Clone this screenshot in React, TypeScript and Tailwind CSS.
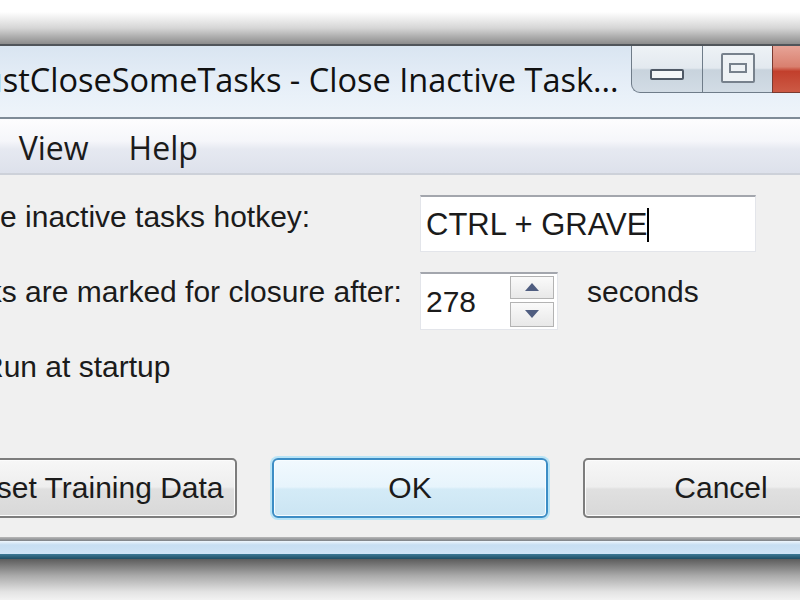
function CaptionButtons() {
  return (
    <div className="flex h-[47px] shrink-0 items-stretch">
      <div className="flex w-[71px] justify-center rounded-bl-[9px] border-b border-l border-[#6f7c89] bg-[linear-gradient(to_bottom,#eef2f6_0%,#e3e9ef_48%,#c8d3dd_52%,#d2dce5_100%)] pt-[23px]">
        <div className="h-[11px] w-[34px] rounded-[2px] border-2 border-[#4f5966] bg-[#f4f6f8]" />
      </div>
      <div className="flex w-[70px] justify-center border-b border-l border-[#6f7c89] bg-[linear-gradient(to_bottom,#eef2f6_0%,#e3e9ef_48%,#c8d3dd_52%,#d2dce5_100%)] pt-[7px]">
        <div className="flex h-[30px] w-[34px] items-center justify-center rounded-[2px] border-2 border-[#77818c] bg-[#eef2f5]">
          <div className="h-[10px] w-[18px] border-2 border-[#77818c]" />
        </div>
      </div>
      <div className="w-[28px] border-b border-l border-[#7a3a30] bg-[linear-gradient(to_bottom,#e7a497_0%,#d9806f_45%,#c23f2c_55%,#cc5a45_100%)]" />
    </div>
  );
}

function Arrow({ up }: { up?: boolean }) {
  return (
    <svg width="14" height="8" viewBox="0 0 14 8">
      <path d={up ? "M7 0 L14 8 L0 8 Z" : "M0 0 L14 0 L7 8 Z"} fill="#4f5d80" />
    </svg>
  );
}

function VistaButton({ label, width, focused }: { label: string; width: string; focused?: boolean }) {
  return (
    <button
      className={
        focused
          ? `${width} h-[60px] shrink-0 rounded-[6px] border-2 border-[#3c8dc5] bg-[linear-gradient(to_bottom,#f1f9fe_0%,#e7f4fc_48%,#d4ebf7_52%,#cbe5f3_100%)] text-center text-[30px] leading-[30px] shadow-[0_0_0_2px_#b8e4f7,inset_0_0_0_1px_#f7fcff]`
          : `${width} h-[60px] shrink-0 rounded-[5px] border-2 border-[#7d7d7d] bg-[linear-gradient(to_bottom,#f7f7f7_0%,#eeeeee_48%,#e0e0e0_52%,#d8d8d8_100%)] text-center text-[30px] leading-[30px] shadow-[inset_0_0_0_1px_#fcfcfc]`
      }
    >
      {label}
    </button>
  );
}

export default function App() {
  return (
    <div className="flex h-[600px] w-[800px] flex-col overflow-hidden bg-white font-['Liberation_Sans',Arial,sans-serif] text-[#1b1b1b]">
      <div className="h-[44px] shrink-0 bg-[linear-gradient(to_bottom,#ffffff_0px,#ffffff_12px,#d6d6d6_28px,#8c8c8c_44px)]" />
      <div className="h-[2px] shrink-0 bg-[#50555a]" />

      {/* title bar */}
      <div className="flex h-[71px] shrink-0 items-start bg-[linear-gradient(to_bottom,#d9e5f1_0%,#e3ecf6_40%,#e9f1f9_70%,#eef4fa_100%)]">
        <div className="min-w-0 flex-1 overflow-hidden whitespace-nowrap pt-[17px]">
          <span className="ml-[-26px] font-['Open_Sans','Noto_Sans',sans-serif] text-[32.5px] leading-[34px] text-[#111]">
            JustCloseSomeTasks - Close Inactive Task...
          </span>
        </div>
        <CaptionButtons />
      </div>
      <div className="h-[2px] shrink-0 bg-[#7e8b97]" />
      <div className="h-[1px] shrink-0 bg-[#fafbfd]" />

      {/* menu */}
      <div className="flex h-[53px] shrink-0 items-start whitespace-nowrap bg-[linear-gradient(to_bottom,#fdfdfe_0%,#f5f6fa_40%,#e6e9f1_55%,#dde1eb_100%)] pt-[12px] font-['Open_Sans','Noto_Sans',sans-serif] text-[32px] leading-[32px]">
        <span className="ml-[-92px] px-[20px]">File</span>
        <span className="px-[20px]">View</span>
        <span className="px-[20px]">Help</span>
      </div>
      <div className="h-[2px] shrink-0 bg-[#cdd1d9]" />

      {/* content */}
      <div className="h-[362px] shrink-0 overflow-hidden bg-[#f0f0f0]">
        <div className="ml-[-60px] flex flex-col whitespace-nowrap pt-[20px] text-[30px] leading-[30px]">
          <div className="flex h-[57px]">
            <div className="w-[480px] shrink-0 pt-[7px]">Close inactive tasks hotkey:</div>
            <div className="flex h-[57px] w-[336px] shrink-0 items-start border border-[#e3e5ea] border-t-2 border-t-[#a3a6ad] bg-white pl-[5px] pt-[13px] text-[31px]">
              <span>CTRL + GRAVE</span>
              <span className="mt-[-2px] h-[34px] w-[2px] bg-black" />
            </div>
          </div>

          <div className="mt-[20px] flex h-[58px]">
            <div className="w-[480px] shrink-0 pt-[5px]">Tasks are marked for closure after:</div>
            <div className="flex h-[58px] w-[138px] shrink-0 border border-[#e3e5ea] border-t-2 border-t-[#a3a6ad] bg-white">
              <div className="flex-1 pl-[5px] pt-[13px]">278</div>
              <div className="mr-[3px] flex w-[44px] flex-col gap-[3px] py-[2px]">
                <div className="flex h-[23px] items-center justify-center border border-[#b3b3b3] bg-[linear-gradient(to_bottom,#fafafa,#e8e8e8)]">
                  <Arrow up />
                </div>
                <div className="flex h-[26px] items-center justify-center border border-[#b3b3b3] bg-[linear-gradient(to_bottom,#fafafa,#e8e8e8)]">
                  <Arrow />
                </div>
              </div>
            </div>
            <div className="ml-[29px] pt-[5px]">seconds</div>
          </div>

          <div className="mt-[22px] flex h-[30px] items-center">
            <div className="h-[35px] w-[35px] shrink-0 border-2 border-[#8f8f8f] bg-white" />
            <span className="ml-[7px]">Run at startup</span>
          </div>

          <div className="mt-[76px] flex gap-[35px] pl-[5px]">
            <VistaButton label="Reset Training Data" width="w-[292px]" />
            <VistaButton label="OK" width="w-[276px]" focused />
            <VistaButton label="Cancel" width="w-[276px]" />
          </div>
        </div>
      </div>

      {/* bottom frame */}
      <div className="h-[4px] shrink-0 bg-[linear-gradient(to_bottom,#b9b9b9,#7d8186)]" />
      <div className="h-[13px] shrink-0 bg-[linear-gradient(to_bottom,#eef6fd,#c7def2_30%,#cfe3f5)]" />
      <div className="h-[5px] shrink-0 bg-[linear-gradient(to_bottom,#3d7a96,#1f4d63)]" />
      <div className="flex-1 bg-[linear-gradient(to_bottom,#5c5c5c,#a9a9a9_40%,#e3e3e3_80%,#f2f2f2)]" />
    </div>
  );
}
